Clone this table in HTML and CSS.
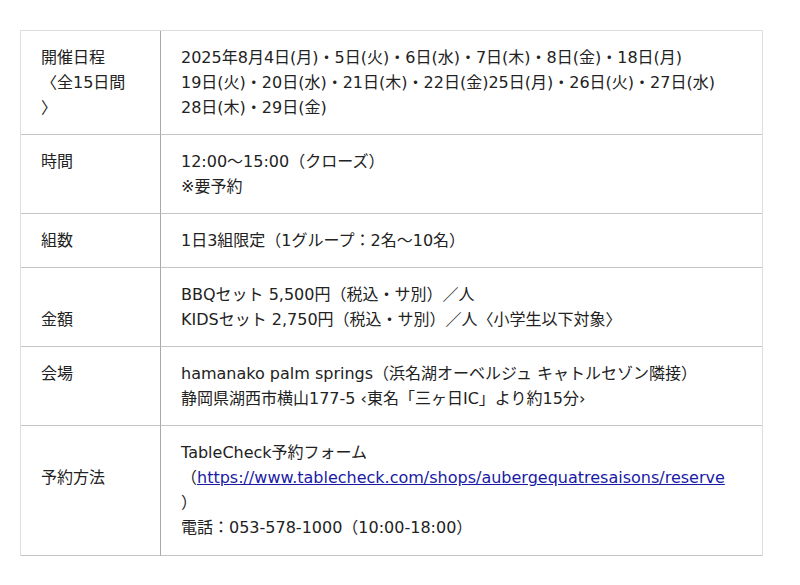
FILE: index.html
```html
<!DOCTYPE html>
<html lang="ja">
<head>
<meta charset="utf-8">
<link rel="stylesheet" href="styles.css">
</head>
<body>
<div class="wrap">
<table class="info">
<tr>
<th class="label">開催日程<br>〈全15日間<br>〉</th>
<td class="value">2025年8月4日(月)・5日(火)・6日(水)・7日(木)・8日(金)・18日(月)<br>19日(火)・20日(水)・21日(木)・22日(金)25日(月)・26日(火)・27日(水)<br>28日(木)・29日(金)</td>
</tr>
<tr>
<th class="label">時間</th>
<td class="value">12:00〜15:00（クローズ）<br>※要予約</td>
</tr>
<tr>
<th class="label">組数</th>
<td class="value">1日3組限定（1グループ：2名〜10名）</td>
</tr>
<tr>
<th class="label"><br>金額</th>
<td class="value">BBQセット 5,500円（税込・サ別）／人<br>KIDSセット 2,750円（税込・サ別）／人〈小学生以下対象〉</td>
</tr>
<tr>
<th class="label">会場</th>
<td class="value">hamanako palm springs（浜名湖オーベルジュ キャトルセゾン隣接）<br>静岡県湖西市横山177-5 ‹東名「三ヶ日IC」より約15分›</td>
</tr>
<tr>
<th class="label last"><br>予約方法</th>
<td class="value last">TableCheck予約フォーム<br>（<a class="link" href="#">https://www.tablecheck.com/shops/aubergequatresaisons/reserve</a><br>）<br>電話：053-578-1000（10:00-18:00）</td>
</tr>
</table>
</div>
</body>
</html>
```
FILE: styles.css
```css
html, body {
  margin: 0;
  padding: 0;
  background: #fff;
}
.wrap {
  padding: 30px 0 0 20px;
}
.info {
  width: 743px;
  border-collapse: separate;
  border-spacing: 0;
  border-top: 1px solid #dedede;
  border-left: 1px solid #dedede;
  border-right: 1px solid #dedede;
  font-family: "DejaVu Sans", "Noto Sans CJK JP", sans-serif;
  font-size: 16px;
  line-height: 25px;
  color: #222;
}
.label, .value {
  text-align: left;
  vertical-align: top;
  font-weight: normal;
  padding: 14px 20px;
  border-bottom: 1px solid #c4c4c4;
}
.label {
  width: 99px;
  border-right: 1px solid #a8a8a8;
}
.last {
  padding-bottom: 15px;
}
.link {
  color: #1a1aa6;
  text-decoration: underline;
}
```
